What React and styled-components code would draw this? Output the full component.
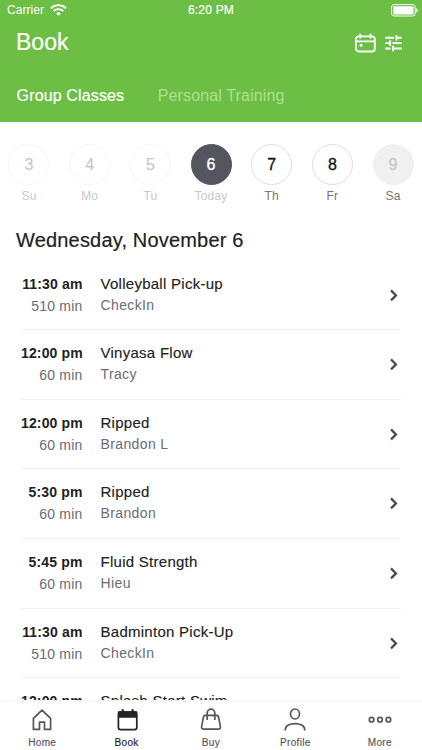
import React from 'react';
import styled, { createGlobalStyle, css } from 'styled-components';

const green = '#6cbe45';
const slate = '#54555f';

const GlobalStyle = createGlobalStyle`
  * {
    box-sizing: border-box;
  }
  body {
    margin: 0;
    overflow: hidden;
    background: white;
    font-family: 'Liberation Sans', Arial, sans-serif;
  }
  button {
    border: 0;
    padding: 0;
    background: none;
    font-family: inherit;
  }
  svg {
    display: block;
  }
`;

const days = [
  { date: 3, label: 'Su', state: 'past' },
  { date: 4, label: 'Mo', state: 'past' },
  { date: 5, label: 'Tu', state: 'past' },
  { date: 6, label: 'Today', state: 'selected' },
  { date: 7, label: 'Th', state: 'open' },
  { date: 8, label: 'Fr', state: 'open' },
  { date: 9, label: 'Sa', state: 'closed' },
];

const classes = [
  { time: '11:30 am', length: '510 min', name: 'Volleyball Pick-up', staff: 'CheckIn' },
  { time: '12:00 pm', length: '60 min', name: 'Vinyasa Flow', staff: 'Tracy' },
  { time: '12:00 pm', length: '60 min', name: 'Ripped', staff: 'Brandon L' },
  { time: '5:30 pm', length: '60 min', name: 'Ripped', staff: 'Brandon' },
  { time: '5:45 pm', length: '60 min', name: 'Fluid Strength', staff: 'Hieu' },
  { time: '11:30 am', length: '510 min', name: 'Badminton Pick-Up', staff: 'CheckIn' },
  { time: '12:00 pm', name: 'Splash Start Swim' },
];

const Screen = styled.div`
  width: 422px;
  height: 750px;
  display: flex;
  flex-direction: column;
  overflow: hidden;
`;

const Header = styled.header`
  height: 122px;
  flex: none;
  background: ${green};
  color: white;
`;

const StatusBar = styled.div`
  height: 20px;
  display: grid;
  grid-template-columns: 1fr auto 1fr;
  align-items: center;
  padding: 0 4px 0 7px;
  font-size: 12px;
  line-height: 20px;
`;

const Carrier = styled.div`
  display: flex;
  align-items: center;
  gap: 6px;
  letter-spacing: 0.05px;
`;

const Clock = styled.span`
  margin-right: 3px;
  letter-spacing: 0.2px;
  -webkit-text-stroke: 0.2px;
`;

const Battery = styled.div`
  justify-self: end;
`;

const TitleBar = styled.div`
  height: 45px;
  display: flex;
  align-items: center;
  justify-content: space-between;
  padding: 0 20px 0 16px;
`;

const Title = styled.h1`
  margin: 0;
  font-size: 23px;
  font-weight: normal;
  -webkit-text-stroke: 0.2px;
`;

const Actions = styled.div`
  display: flex;
  align-items: center;
  gap: 9px;
`;

const Tabs = styled.nav`
  height: 57px;
  display: flex;
  align-items: center;
  gap: 33.5px;
  padding: 4px 17px 0 16.6px;
`;

const Tab = styled.button`
  color: ${(props) => (props.$active ? 'white' : '#b0e090')};
  font-size: 16px;
  letter-spacing: 0.14px;
  ${(props) => props.$active && '-webkit-text-stroke: 0.2px;'}
`;

const Week = styled.div`
  height: 96px;
  flex: none;
  display: flex;
  gap: 4.7px;
  padding: 22.4px 1px 0;
`;

const Day = styled.div`
  width: 56px;
  display: flex;
  flex-direction: column;
  align-items: center;
  gap: 2.6px;
`;

const circleStyles = {
  past: css`
    border-color: #f6f6f6;
    color: #c6c6c6;
  `,
  selected: css`
    border-color: ${slate};
    background: ${slate};
    color: white;
  `,
  open: css`
    border-color: #dedede;
    color: #111;
  `,
  closed: css`
    border-color: #f0f0f0;
    background: #f0f0f0;
    color: #c6c6c6;
  `,
};

const Circle = styled.div`
  width: 41px;
  height: 41px;
  display: flex;
  align-items: center;
  justify-content: center;
  border: 1px solid;
  border-radius: 50%;
  font-size: 16px;
  -webkit-text-stroke: ${(props) => (props.$state === 'past' ? '0.1px' : '0.3px')};
  ${(props) => circleStyles[props.$state]}
`;

const DayLabel = styled.span`
  color: ${(props) => (props.$faded ? '#c8c8c8' : '#757575')};
  font-size: 12px;
  line-height: 16px;
  letter-spacing: 0.15px;
`;

const DateHeading = styled.h2`
  height: 42.6px;
  flex: none;
  margin: 0;
  padding: 9px 16px 0;
  color: #222;
  font-size: 20px;
  font-weight: normal;
  line-height: 26px;
  letter-spacing: 0.18px;
  -webkit-text-stroke: 0.2px;
`;

const List = styled.div`
  flex: 1;
  min-height: 0;
  overflow: hidden;
  padding: 0 21px;
`;

const Row = styled.div`
  height: 69.6px;
  display: grid;
  grid-template-columns: 61.5px 1fr auto;
  column-gap: 18px;
  border-bottom: 1px solid #f0f0f0;
`;

const When = styled.div`
  padding-top: 12px;
  text-align: right;
  white-space: nowrap;
`;

const Time = styled.div`
  color: #222;
  font-size: 14px;
  font-weight: bold;
  line-height: 22px;
  letter-spacing: 0.15px;
`;

const Length = styled.div`
  color: #6b6c74;
  font-size: 14px;
  line-height: 22px;
  letter-spacing: 0.2px;
`;

const What = styled.div`
  padding-top: 12px;
`;

const Name = styled.div`
  color: #222;
  font-size: 15px;
  line-height: 22px;
  letter-spacing: 0.27px;
  -webkit-text-stroke: 0.15px;
`;

const Staff = styled.div`
  color: #6b6c74;
  font-size: 14px;
  line-height: 20px;
  letter-spacing: 0.38px;
`;

const Arrow = styled.div`
  padding: 28.1px 2px 0 0;
`;

const BottomNav = styled.nav`
  height: 50px;
  flex: none;
  display: grid;
  grid-template-columns: repeat(5, 1fr);
  border-top: 1px solid #f3f3f3;
  background: white;
`;

const NavItem = styled.button`
  display: flex;
  flex-direction: column;
  align-items: center;
  gap: 5px;
  padding-top: 7px;
  color: ${(props) => (props.$active ? '#222228' : slate)};
  font-size: 10px;
  line-height: 12px;
  letter-spacing: 0.35px;
  -webkit-text-stroke: 0.15px;
`;

const WifiIcon = () => (
  <svg width="17" height="12" viewBox="0 0 17 12" fill="none" stroke="currentColor" strokeWidth="1.9">
    <path d="M1 4.2a10.8 10.8 0 0 1 15 0" />
    <path d="M3.7 7a7 7 0 0 1 9.6 0" />
    <path d="M8.5 11.8 6.2 9.4a3.4 3.4 0 0 1 4.6 0z" fill="currentColor" stroke="none" />
  </svg>
);

const BatteryIcon = () => (
  <svg width="27" height="13" viewBox="0 0 27 13">
    <rect x=".6" y=".6" width="23.6" height="11.4" rx="2.5" fill="none" stroke="currentColor" strokeWidth="1" />
    <rect x="2.3" y="2.2" width="20.2" height="8.2" rx="1" fill="currentColor" />
    <path d="M25.3 4.2c1.9.6 1.9 3.6 0 4.2z" fill="currentColor" />
  </svg>
);

const CalendarIcon = () => (
  <svg width="21" height="20" viewBox="0 0 21 20" fill="none" stroke="currentColor" strokeWidth="1.8">
    <rect x="1" y="3.3" width="18.8" height="15.2" rx="2.8" />
    <path d="M1 8.3h18.8M5.2.8v4.6M15.5.8v4.6" />
    <circle cx="6" cy="12.2" r="1.5" fill="currentColor" stroke="none" />
  </svg>
);

const FiltersIcon = () => (
  <svg width="17" height="18" viewBox="0 0 17 18" fill="none" stroke="currentColor" strokeWidth="1.9">
    <path d="M.3 3.7h8.9M11.5 3.7h5.2M11.5.9v5.6M.3 9.1h4.9M7.4 9.1h9.3M5.2 6.3v5.6M.3 14.5h5.2M8 14.5h8.7M8 11.7v5.6" />
  </svg>
);

const ChevronIcon = () => (
  <svg width="10" height="13" viewBox="0 0 10 13" fill="none" stroke="#4a4a4d" strokeWidth="2.2">
    <path d="m2 1.4 5 5-5 5" />
  </svg>
);

const NavIcon = ({ children }) => (
  <svg width="24" height="24" viewBox="0 0 24 24" fill="none" stroke="currentColor" strokeWidth="1.7">
    {children}
  </svg>
);

const HomeIcon = () => (
  <NavIcon>
    <path d="M3.4 10.4 12 2.2l8.6 8.2v11h-6.1v-7.2H9.5v7.2H3.4z" strokeLinejoin="round" />
  </NavIcon>
);

const BookIcon = () => (
  <NavIcon>
    <rect x="3.4" y="4" width="18.4" height="17.6" rx="2" />
    <path d="M3.9 4h17.4v5H3.9z" fill="currentColor" />
    <path d="M7.7 1.3v3M17.6 1.3v3" strokeWidth="2.2" />
  </NavIcon>
);

const BuyIcon = () => (
  <NavIcon>
    <path
      d="M6.2 7.4h11.6q1.4 0 1.7 1.4l1.9 9.8q.3 2.6-2.2 2.6H4.8q-2.5 0-2.2-2.6l1.9-9.8q.3-1.4 1.7-1.4z"
      strokeLinejoin="round"
    />
    <path d="M8.2 12V5a3.8 3.8 0 0 1 7.6 0v7" />
  </NavIcon>
);

const ProfileIcon = () => (
  <NavIcon>
    <ellipse cx="12" cy="6" rx="4.5" ry="5" />
    <path d="M2.3 22.6v-1c0-8 19.4-8 19.4 0v1" />
  </NavIcon>
);

const MoreIcon = () => (
  <NavIcon>
    <circle cx="3.6" cy="11.7" r="2.3" />
    <circle cx="12" cy="11.7" r="2.3" />
    <circle cx="20.4" cy="11.7" r="2.3" />
  </NavIcon>
);

const navItems = [
  { label: 'Home', Icon: HomeIcon },
  { label: 'Book', Icon: BookIcon, active: true },
  { label: 'Buy', Icon: BuyIcon },
  { label: 'Profile', Icon: ProfileIcon },
  { label: 'More', Icon: MoreIcon },
];

const App = () => (
  <>
    <GlobalStyle />
    <Screen>
      <Header>
        <StatusBar>
          <Carrier>
            Carrier
            <WifiIcon />
          </Carrier>
          <Clock>6:20 PM</Clock>
          <Battery>
            <BatteryIcon />
          </Battery>
        </StatusBar>
        <TitleBar>
          <Title>Book</Title>
          <Actions>
            <CalendarIcon />
            <FiltersIcon />
          </Actions>
        </TitleBar>
        <Tabs>
          <Tab $active>Group Classes</Tab>
          <Tab>Personal Training</Tab>
        </Tabs>
      </Header>
      <Week>
        {days.map(({ date, label, state }) => (
          <Day key={date}>
            <Circle $state={state}>{date}</Circle>
            <DayLabel $faded={state === 'past' || state === 'selected'}>{label}</DayLabel>
          </Day>
        ))}
      </Week>
      <DateHeading>Wednesday, November 6</DateHeading>
      <List>
        {classes.map(({ time, length, name, staff }, i) => (
          <Row key={i}>
            <When>
              <Time>{time}</Time>
              {length && <Length>{length}</Length>}
            </When>
            <What>
              <Name>{name}</Name>
              {staff && <Staff>{staff}</Staff>}
            </What>
            <Arrow>
              <ChevronIcon />
            </Arrow>
          </Row>
        ))}
      </List>
      <BottomNav>
        {navItems.map(({ label, Icon, active }) => (
          <NavItem key={label} $active={active}>
            <Icon />
            {label}
          </NavItem>
        ))}
      </BottomNav>
    </Screen>
  </>
);

export default App;
